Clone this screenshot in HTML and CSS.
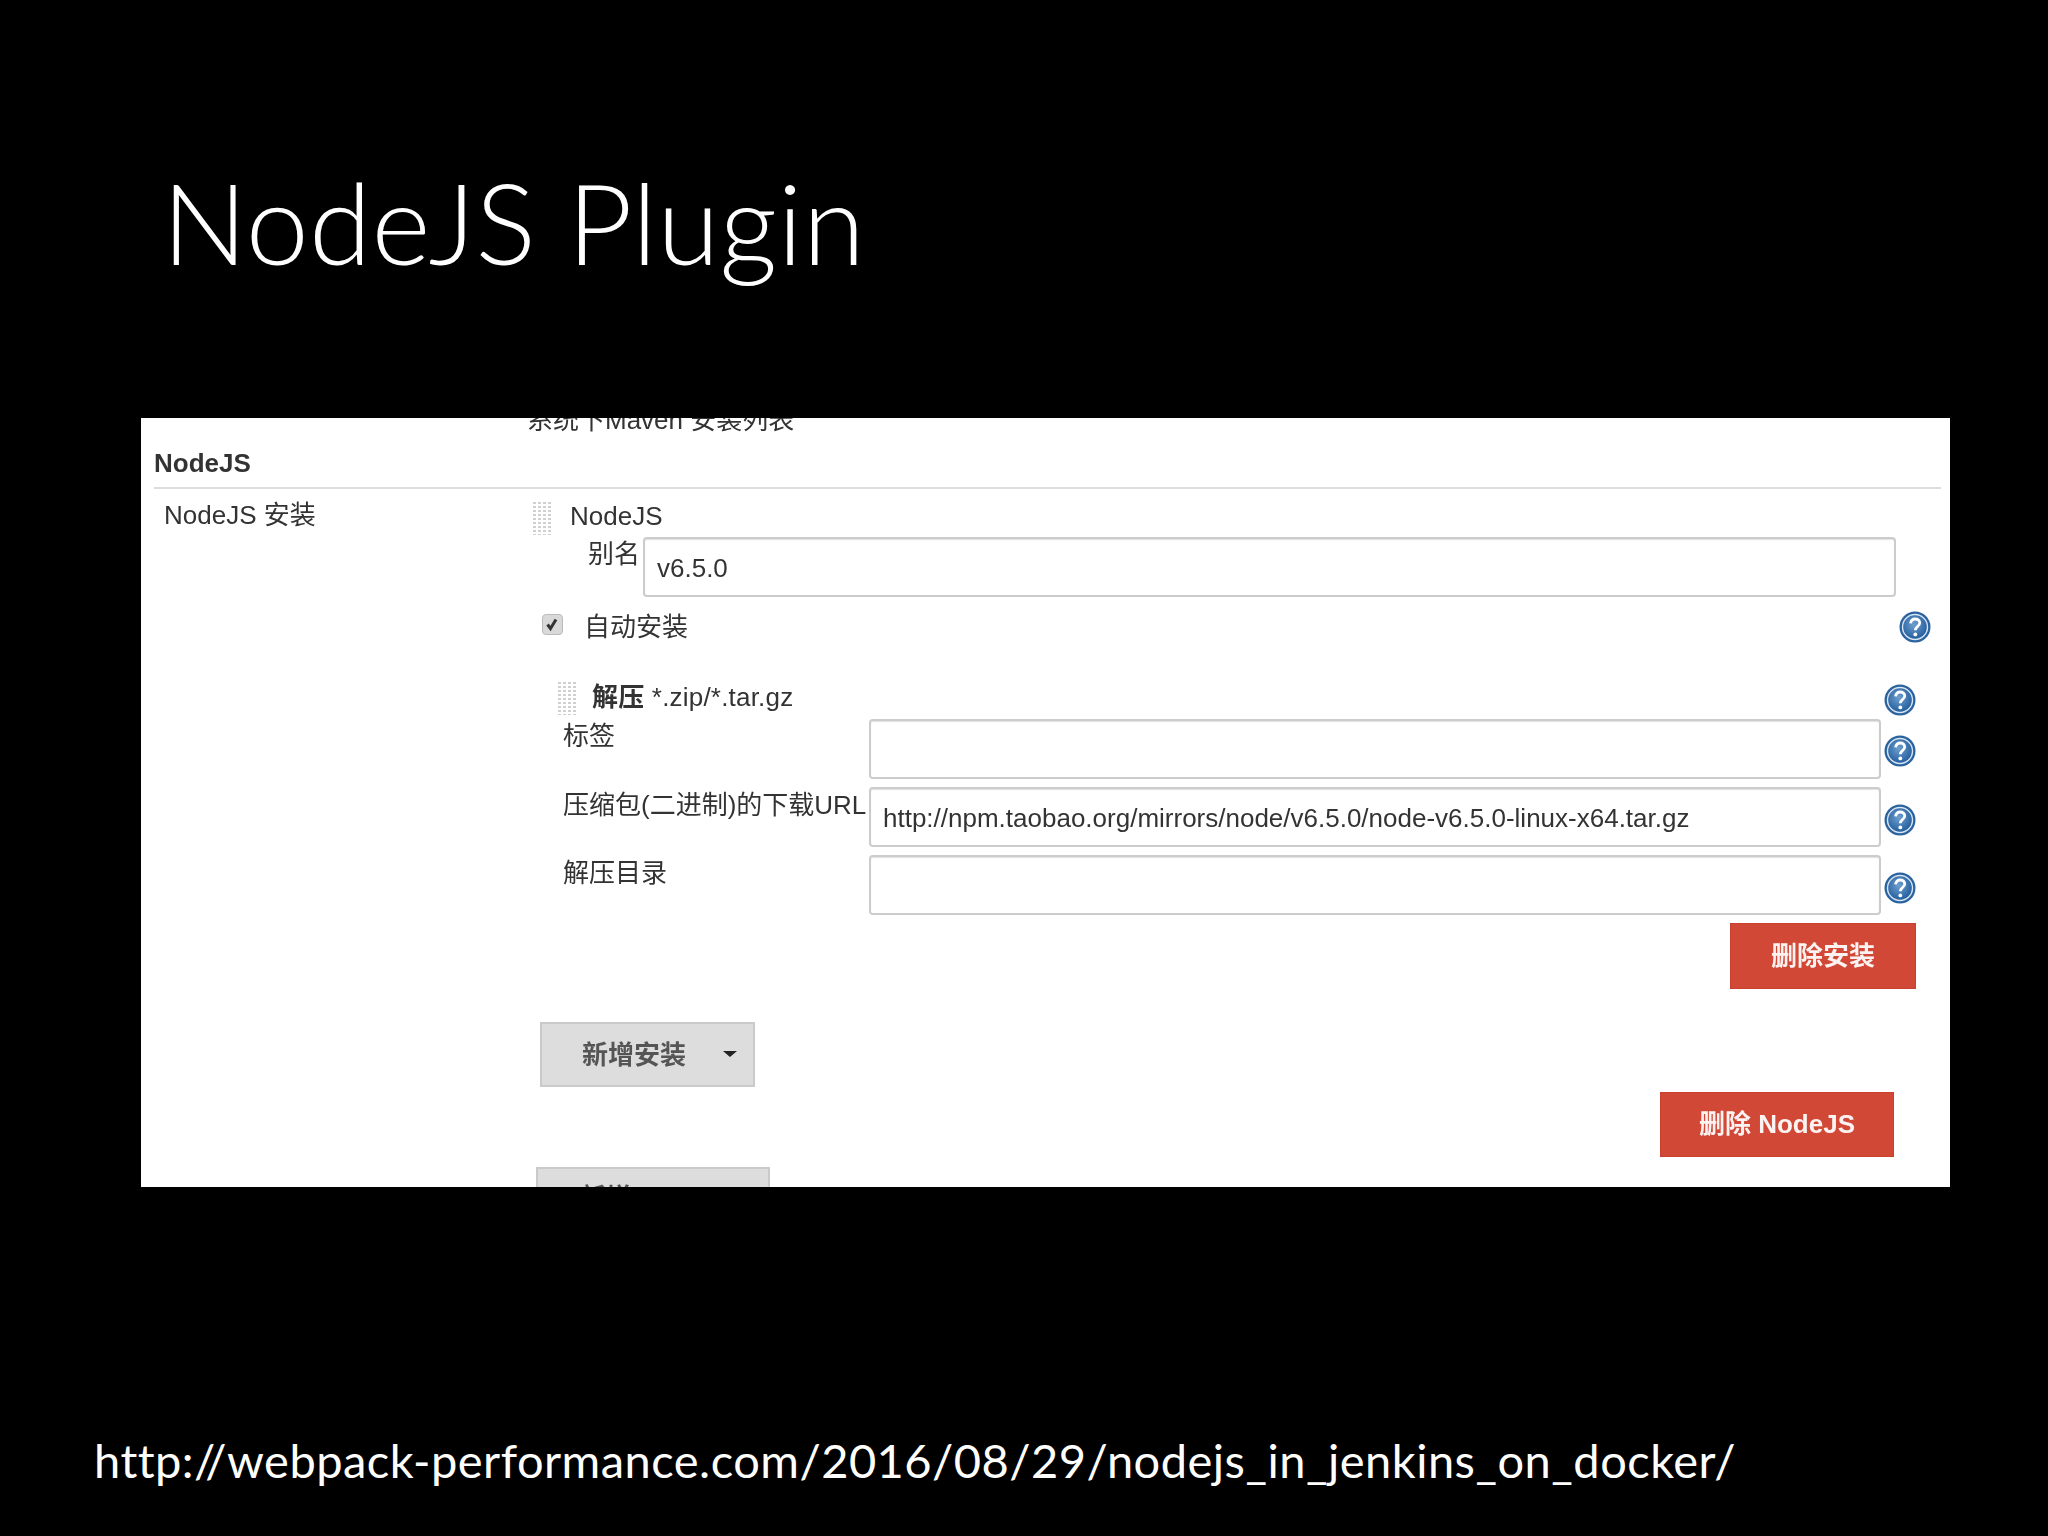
FILE: index.html
```html
<!DOCTYPE html>
<html lang="zh-CN">
<head>
<meta charset="utf-8">
<title>NodeJS Plugin</title>
<link rel="stylesheet" href="styles.css">
</head>
<body>
<svg class="defs" width="0" height="0" aria-hidden="true">
  <defs>
    <radialGradient id="helpfill" cx="45%" cy="40%" r="65%">
      <stop offset="0" stop-color="#6f9fcf"/>
      <stop offset="1" stop-color="#1f5a9a"/>
    </radialGradient>
    <symbol id="help" viewBox="0 0 32 32">
      <circle cx="16" cy="16" r="15.5" fill="#2a639f"/>
      <circle cx="16" cy="16" r="13.2" fill="#d7e4f1"/>
      <circle cx="16" cy="16" r="11.8" fill="url(#helpfill)"/>
      <path d="M11.6 12.4c.4-3 2.4-4.4 4.7-4.4 2.6 0 4.4 1.7 4.4 3.9 0 3.6-4.3 3.6-4.4 7.4" fill="none" stroke="#fff" stroke-width="2.8"/>
      <circle cx="16.3" cy="23.4" r="1.9" fill="#fff"/>
    </symbol>
  </defs>
</svg>
<main class="slide">
  <h1 class="title">NodeJS Plugin</h1>
  <section class="panel">
    <div class="clipped-note">系统下Maven 安装列表</div>
    <div class="section-head">NodeJS</div>
    <div class="section-body">
      <div class="section-label">NodeJS 安装</div>
      <div class="installs">
        <div class="drag-row">
          <span class="grip"></span>
          <span class="drag-title">NodeJS</span>
        </div>
        <div class="alias-row">
          <label class="alias-label">别名</label>
          <div class="field field-alias">v6.5.0</div>
        </div>
        <div class="check-row">
          <span class="checkbox"><svg viewBox="0 0 20 20" width="20" height="20"><path d="M5.5 10.5l3 4 5.5-9" fill="none" stroke="#333" stroke-width="3"/></svg></span>
          <span class="check-label">自动安装</span>
          <svg class="help help-auto"><use href="#help"/></svg>
        </div>
        <div class="extract-head">
          <span class="grip grip-small"></span>
          <span class="extract-title"><b>解压</b> *.zip/*.tar.gz</span>
          <svg class="help"><use href="#help"/></svg>
        </div>
        <div class="extract-form">
          <label class="form-label">标签</label>
          <div class="field"></div>
          <svg class="help help-a"><use href="#help"/></svg>
          <label class="form-label form-label-low">压缩包(二进制)的下载URL</label>
          <div class="field">http://npm.taobao.org/mirrors/node/v6.5.0/node-v6.5.0-linux-x64.tar.gz</div>
          <svg class="help help-b"><use href="#help"/></svg>
          <label class="form-label form-label-low">解压目录</label>
          <div class="field"></div>
          <svg class="help help-b"><use href="#help"/></svg>
        </div>
        <div class="btn-row btn-row-install"><button class="btn btn-red btn-del-install">删除安装</button></div>
        <button class="btn btn-gray btn-add-install"><span>新增安装</span><i class="caret"></i></button>
        <div class="btn-row btn-row-node"><button class="btn btn-red btn-del-node">删除 NodeJS</button></div>
        <button class="btn btn-gray btn-add-node">新增 NodeJS</button>
      </div>
    </div>
  </section>
  <p class="source">http://webpack-performance.com/2016/08/29/nodejs_in_jenkins_on_docker/</p>
</main>
</body>
</html>
```
FILE: styles.css
```css
* { box-sizing: border-box; }
html, body { margin: 0; padding: 0; background: #000; }
.defs { position: absolute; }
.slide {
  width: 2048px;
  height: 1536px;
  overflow: hidden;
  background: #000;
  color: #fff;
  font-family: Lato, "Open Sans", sans-serif;
}
.title {
  margin: 161px 0 0 162px;
  font-size: 113px;
  font-weight: 300;
  line-height: 120px;
  letter-spacing: 0.2px;
  white-space: nowrap;
}
.source {
  margin: 243px 0 0 94px;
  font-size: 47px;
  line-height: 60px;
  letter-spacing: 0.48px;
  white-space: nowrap;
}
.panel {
  width: 1809px;
  height: 769px;
  margin: 137px 0 0 141px;
  overflow: hidden;
  background: #fff;
  color: #333;
  font-family: "Liberation Sans", "Noto Sans CJK SC", sans-serif;
  font-size: 26px;
  line-height: 26px;
}
.panel > * { filter: blur(0.5px); }
.clipped-note {
  height: 26px;
  margin-top: -11px;
  padding-left: 386px;
  white-space: nowrap;
}
.section-head {
  height: 56px;
  margin: 0 9px 0 13px;
  padding-top: 17px;
  border-bottom: 2px solid #ddd;
  font-weight: 700;
}
.section-body { display: flex; padding-top: 13px; }
.section-label { width: 392px; padding-left: 23px; white-space: nowrap; }
.installs { flex: 1; min-width: 0; }
.grip {
  display: block;
  flex: none;
  width: 20px;
  height: 33px;
  background-image:
    linear-gradient(90deg, transparent 60%, #fff 60%),
    linear-gradient(#d0d0d0 50%, transparent 50%);
  background-size: 5px 100%, 100% 4px;
}
.grip-small { margin-left: 25px; }
.drag-row { display: flex; height: 35px; }
.drag-title { margin-left: 17px; padding-top: 1px; }
.alias-row { display: flex; height: 60px; }
.alias-label { width: 110px; padding: 4px 3px 0 0; text-align: right; }
.field {
  height: 60px;
  padding: 0 12px;
  border: 2px solid #ccc;
  border-radius: 4px;
  background: #fff;
  box-shadow: inset 0 1px 1px #e2e2e2;
  line-height: 58px;
  white-space: nowrap;
}
.field-alias { width: 1253px; }
.check-row { display: flex; height: 32px; margin-top: 14px; }
.checkbox {
  display: block;
  width: 21px;
  height: 21px;
  margin: 3px 0 0 9px;
  border: 1px solid #bbb;
  border-radius: 4px;
  background: #d9d9d9;
}
.checkbox svg { display: block; margin: -1px; }
.check-label { margin: 3px 0 0 21px; }
.help { display: block; flex: none; width: 32px; height: 32px; }
.help-auto { margin: 0 19px 0 auto; }
.help-a { margin-top: 16px; }
.help-b { margin-top: 17px; }
.extract-head { display: flex; height: 33px; margin-top: 39px; }
.extract-head .help { margin: 2px 34px 0 auto; }
.extract-title { margin: 2px 0 0 14px; letter-spacing: 0.2px; white-space: nowrap; }
.extract-form {
  display: grid;
  grid-template-columns: 333px 1012px 32px;
  grid-auto-rows: 60px;
  column-gap: 3px;
  row-gap: 8px;
  margin-top: 4px;
}
.extract-form .field { grid-column: 2; }
.extract-form .form-label { padding: 4px 0 0 30px; white-space: nowrap; }
.extract-form .form-label-low { padding-top: 5px; }
.extract-form .help { grid-column: 3; }
.btn {
  display: block;
  margin: 0;
  padding: 0;
  border-radius: 0;
  font: inherit;
  font-weight: 700;
  white-space: nowrap;
}
.btn-red { border: 1px solid #c9402f; background: #d14836; color: #fbf3f2; }
.btn-gray { border: 2px solid #cacaca; background: #dddddd; color: #555; }
.btn-row { display: flex; justify-content: flex-end; }
.btn-row-install { margin: 8px 34px 0 0; }
.btn-row-node { margin: 5px 56px 0 0; }
.btn-del-install { width: 186px; height: 66px; }
.btn-del-node { width: 234px; height: 65px; padding-bottom: 2px; }
.btn-add-install {
  display: flex;
  align-items: center;
  width: 215px;
  height: 65px;
  margin: 33px 0 0 7px;
  padding-left: 40px;
}
.caret {
  width: 0;
  height: 0;
  margin: -2px 0 0 37px;
  border-style: solid;
  border-width: 6px 7px 0;
  border-color: #222 transparent transparent;
}
.btn-add-node {
  width: 234px;
  height: 46px;
  margin: 10px 0 0 3px;
  padding: 16px 0 0 42px;
  text-align: left;
}
```
